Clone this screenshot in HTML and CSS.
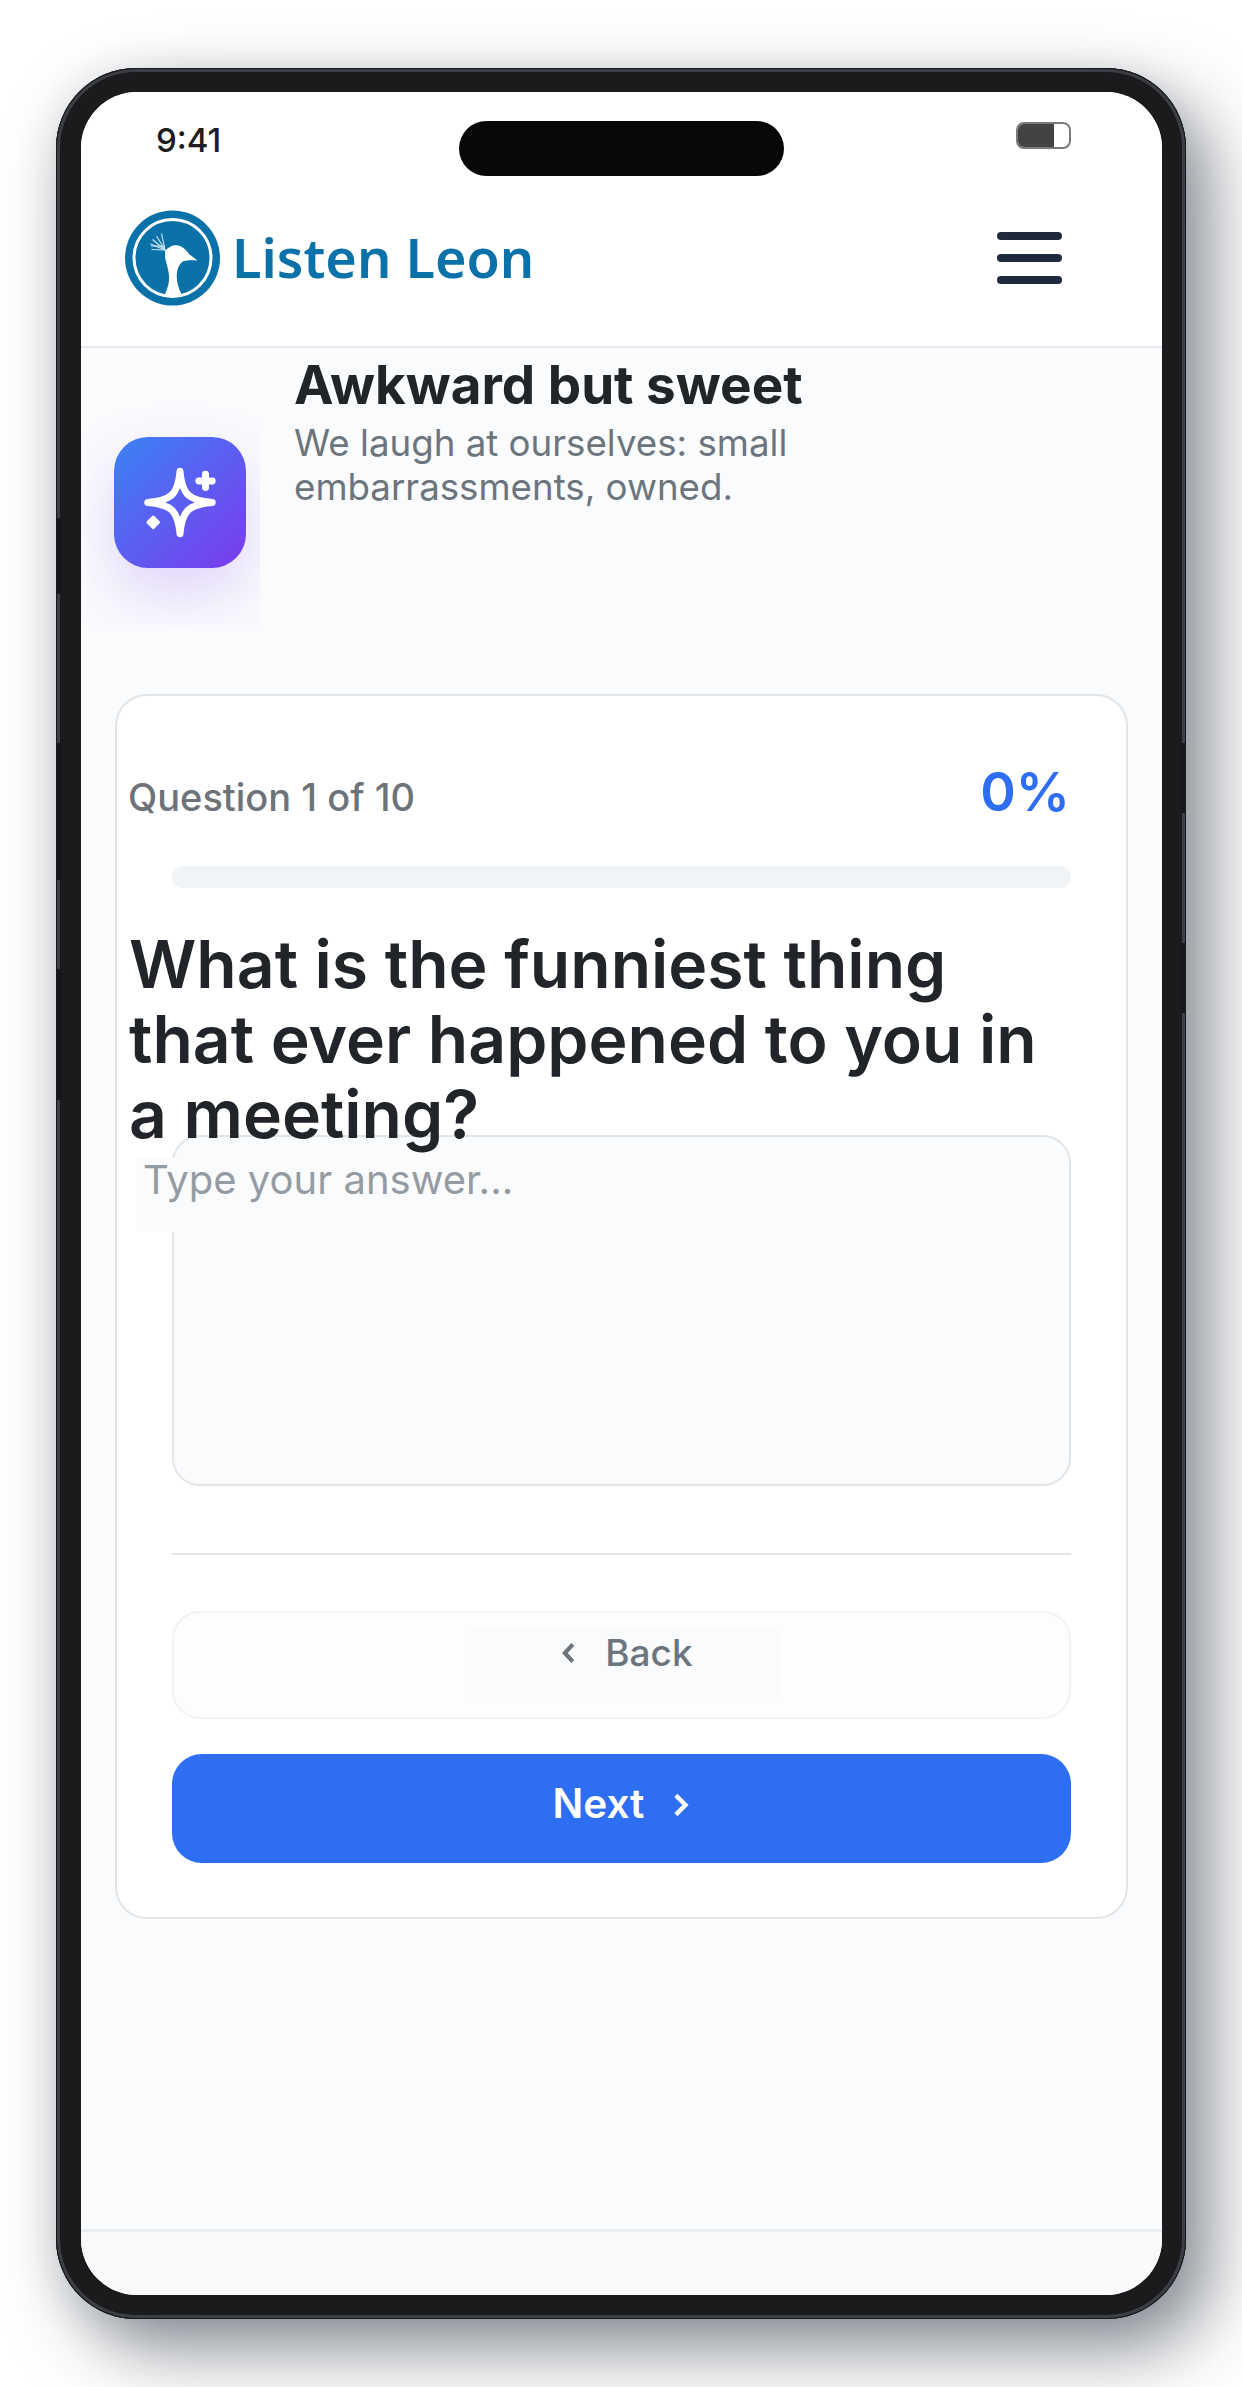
FILE: index.html
```html
<!DOCTYPE html>
<html lang="en">
<head>
    <meta charset="UTF-8">
    <meta name="viewport" content="width=device-width, initial-scale=1.0">
    <title>Listen Leon</title>
    <link rel="stylesheet" href="styles.css">
</head>
<body>
    <div class="phone">
        <!-- gaps in the rim highlight, where the side buttons sit -->
        <span class="rim-gap rim-left-1"></span>
        <span class="rim-gap rim-left-2"></span>
        <span class="rim-gap rim-left-3"></span>
        <span class="rim-gap rim-right-1"></span>
        <span class="rim-gap rim-right-2"></span>

        <div class="screen">
            <div class="status-bar">
                <span class="time">9:41</span>
                <span class="notch"></span>
                <span class="battery"><span class="battery-level"></span></span>
            </div>

            <header class="nav">
                <div class="brand">
                    <svg class="brand-logo" viewBox="0 0 96 96">
                        <circle cx="47.5" cy="48" r="47.5" fill="#0a71a9"/>
                        <circle cx="47.5" cy="48" r="38.5" fill="none" stroke="#fff" stroke-width="3"/>
                        <path d="M40 41 C44 36 49 34.500 53 35.500 C58 36.500 62 41 64 44 L72.500 50.500 C67 50 62 50 59 51 C55 53 53 57 52 62 C51 70 53 78 57 85 C52 87 45 87 39.500 85 C43 78 44.500 72 44 66 C43.500 58 40.500 52 40 46 Z" fill="#fff"/>
                        <g stroke="#cfe6f3" stroke-width="1.100" fill="none">
                            <path d="M40 40 L26.500 39.500"/>
                            <path d="M40 40 L25.500 34"/>
                            <path d="M40 40 L27.500 29.500"/>
                            <path d="M40 40 L31.500 26"/>
                            <path d="M40 40 L36.500 23.500"/>
                            <path d="M40 36 L26 36"/>
                        </g>
                    </svg>
                    <span class="brand-name">Listen Leon</span>
                </div>
                <div class="menu-icon">
                    <span></span>
                    <span></span>
                    <span></span>
                </div>
            </header>

            <main class="content">
                <section class="intro">
                    <div class="intro-icon-box">
                        <div class="intro-icon">
                            <svg viewBox="0 0 132 132">
                                <path d="M66 34.500 C68 57 74 64 98.500 66 C74 68 68 75 66 97.500 C64 75 58 68 33.500 66 C58 64 64 57 66 34.500 Z" fill="none" stroke="#fff" stroke-width="7" stroke-linejoin="round"/>
                                <path d="M91.700 37.500 V51 M85 44.300 H98.500" fill="none" stroke="#fff" stroke-width="7" stroke-linecap="round"/>
                                <path d="M39 81 L44 86 L39 91 L34 86 Z" fill="#fff" stroke="#fff" stroke-width="3.500" stroke-linejoin="round"/>
                            </svg>
                        </div>
                    </div>
                    <div class="intro-text">
                        <h1>Awkward but sweet</h1>
                        <p>We laugh at ourselves: small embarrassments, owned.</p>
                    </div>
                </section>

                <section class="card">
                    <div class="progress-head">
                        <span class="progress-label">Question 1 of 10</span>
                        <span class="progress-value">0%</span>
                    </div>
                    <div class="progress-track"></div>

                    <h2 class="question">What is the funniest thing that ever happened to you in a meeting?</h2>

                    <div class="answer-box">
                        <span class="answer-placeholder">Type your answer...</span>
                    </div>

                    <hr class="divider">

                    <button class="btn btn-back">
                        <span class="btn-inner">
                            <svg class="chevron-back" viewBox="0 0 12 18"><path d="M9.500 2 L3 9 L9.500 16"/></svg>
                            Back
                        </span>
                    </button>
                    <button class="btn btn-next">
                        Next
                        <svg class="chevron-next" viewBox="0 0 14 20"><path d="M3 2.500 L10.500 10 L3 17.500"/></svg>
                    </button>
                </section>
            </main>

            <footer class="footer"></footer>
        </div>
    </div>
</body>
</html>
```

FILE: styles.css
```css
html, body {
    margin: 0;
    padding: 0;
    background-color: #ffffff;
}
body {
    width: 1242px;
    height: 2387px;
    overflow: hidden;
    font-family: "Inter", "Liberation Sans", sans-serif;
}
* {
    box-sizing: border-box;
}

/* phone frame */
.phone {
    position: relative;
    width: 1130px;
    height: 2251px;
    margin: 68px 0 0 56px;
    padding: 24px 24px 24px 25px;
    background-color: #1b1b1e;
    border-radius: 80px;
    box-shadow: inset 0 0 0 1px #17181b, inset 0 0 0 4px #3c3e45, inset 0 0 0 5px #1b1b1e,
        24px 30px 70px rgba(25, 35, 48, 0.52), -6px 4px 40px rgba(25, 35, 48, 0.08);
}
.rim-gap {
    position: absolute;
    width: 6px;
    background-color: #17181b;
}
.rim-left-1 { left: 0; top: 450px; height: 76px; }
.rim-left-2 { left: 0; top: 675px; height: 137px; }
.rim-left-3 { left: 0; top: 901px; height: 131px; }
.rim-right-1 { right: 0; top: 675px; height: 70px; }
.rim-right-2 { right: 0; top: 875px; height: 70px; }

.screen {
    display: flex;
    flex-direction: column;
    height: 100%;
    background-color: #fafbfd;
    border-radius: 56px;
    overflow: hidden;
}

/* status bar */
.status-bar {
    position: relative;
    display: flex;
    justify-content: space-between;
    align-items: flex-start;
    height: 76px;
    padding: 30px 91px 0 75px;
    background-color: #ffffff;
}
.time {
    margin-top: 3px;
    font-size: 33px;
    font-weight: 500;
    line-height: 30px;
    color: #1d1d1f;
}
.notch {
    position: absolute;
    top: 29px;
    left: 378px;
    width: 325px;
    height: 55px;
    background-color: #08080a;
    border-radius: 28px;
}
.battery {
    display: block;
    width: 55px;
    height: 27px;
    border: 2px solid #7a7a7a;
    border-radius: 8px;
    overflow: hidden;
}
.battery-level {
    display: block;
    width: 36px;
    height: 100%;
    background-color: #434345;
}

/* nav */
.nav {
    display: flex;
    justify-content: space-between;
    align-items: center;
    height: 180px;
    padding: 0 100px 0 44px;
    background-color: #ffffff;
    border-bottom: 2px solid #e5e9ee;
}
.brand {
    display: flex;
    align-items: center;
    gap: 11px;
}
.brand-logo {
    width: 96px;
    height: 96px;
    margin-top: 2px;
}
.brand-name {
    font-family: "Noto Sans", sans-serif;
    font-size: 54px;
    font-weight: 600;
    color: #0a71a9;
}
.menu-icon {
    display: flex;
    flex-direction: column;
    gap: 14px;
    width: 65px;
    margin-top: 2px;
}
.menu-icon span {
    height: 8px;
    background-color: #1f2a3d;
    border-radius: 4px;
}

/* page content */
.content {
    flex: 1;
}
.intro {
    display: flex;
}
.intro-icon-box {
    flex: none;
    width: 179px;
    height: 277px;
    padding: 89px 0 0 33px;
    overflow: hidden;
}
.intro-icon {
    width: 132px;
    height: 131px;
    background: linear-gradient(135deg, #3b82f6, #7c3aed);
    border-radius: 34px;
    box-shadow: 0 26px 60px rgba(124, 58, 237, 0.2);
}
.intro-icon svg {
    display: block;
    width: 100%;
    height: 100%;
}
.intro-text {
    padding: 0 150px 0 34px;
}
.intro-text h1 {
    margin: 6px 0 0 0;
    font-size: 53px;
    font-weight: 700;
    line-height: 62px;
    color: #212529;
}
.intro-text p {
    margin: 5px 0 0 0;
    font-size: 36.7px;
    line-height: 44px;
    color: #6c757d;
}

/* question card */
.card {
    margin: 69px 34px 0 34px;
    height: 1225px;
    padding: 0 55px;
    background-color: #ffffff;
    border: 2px solid #e2e5e8;
    border-radius: 32px;
}
.progress-head {
    display: flex;
    justify-content: space-between;
    align-items: flex-end;
    height: 126px;
    margin: 0 1px 0 -44px;
}
.progress-label {
    font-size: 38px;
    font-weight: 500;
    line-height: 50px;
    color: #6e7379;
}
.progress-value {
    font-size: 54px;
    font-weight: 600;
    line-height: 60px;
    color: #2d6ef2;
}
.progress-track {
    height: 22px;
    margin-top: 44px;
    background-color: #f1f4f7;
    border-radius: 11px;
}
.question {
    margin: 39px 0 0 -43px;
    font-size: 66px;
    font-weight: 600;
    line-height: 75px;
    color: #212529;
}
.answer-box {
    height: 351px;
    margin-top: -17px;
    padding-top: 21px;
    background-color: #fafbfd;
    border: 2px solid #e2e5e8;
    border-radius: 28px;
}
.answer-placeholder {
    display: block;
    width: 430px;
    height: 74px;
    margin-left: -38px;
    padding-left: 7px;
    font-size: 40px;
    line-height: 44px;
    color: #959ba2;
    background-color: #fafbfd;
}
.divider {
    height: 2px;
    margin: 67px 0 0 0;
    border: none;
    background-color: #e2e5e8;
}

/* buttons */
.btn {
    display: flex;
    justify-content: center;
    align-items: center;
    width: 100%;
    font-family: inherit;
}
.btn-back {
    height: 108px;
    margin-top: 56px;
    padding: 0 0 0 7px;
    font-size: 37px;
    font-weight: 500;
    color: #6c757d;
    background-color: #fdfdfe;
    border: 2px solid #f0f2f4;
    border-radius: 28px;
}
.btn-inner {
    display: flex;
    justify-content: center;
    align-items: flex-start;
    gap: 29px;
    width: 309px;
    height: 69px;
    margin-bottom: 4px;
    padding: 2px 0 0 4px;
    line-height: 44px;
    background-color: #fafbfc;
}
.chevron-back {
    width: 15px;
    height: 22px;
    margin-top: 11px;
    fill: none;
    stroke: #6c757d;
    stroke-width: 3.400;
}
.btn-next {
    gap: 28px;
    height: 109px;
    margin-top: 35px;
    padding: 0 0 11px 0;
    font-size: 40.5px;
    font-weight: 600;
    color: #ffffff;
    background-color: #2d6ef2;
    border: none;
    border-radius: 30px;
}
.chevron-next {
    width: 18px;
    height: 26px;
    margin-top: 4px;
    fill: none;
    stroke: #ffffff;
    stroke-width: 3.400;
}

/* footer */
.footer {
    height: 66px;
    background-color: #f8fafc;
    border-top: 3px solid #e8ecef;
}
```
